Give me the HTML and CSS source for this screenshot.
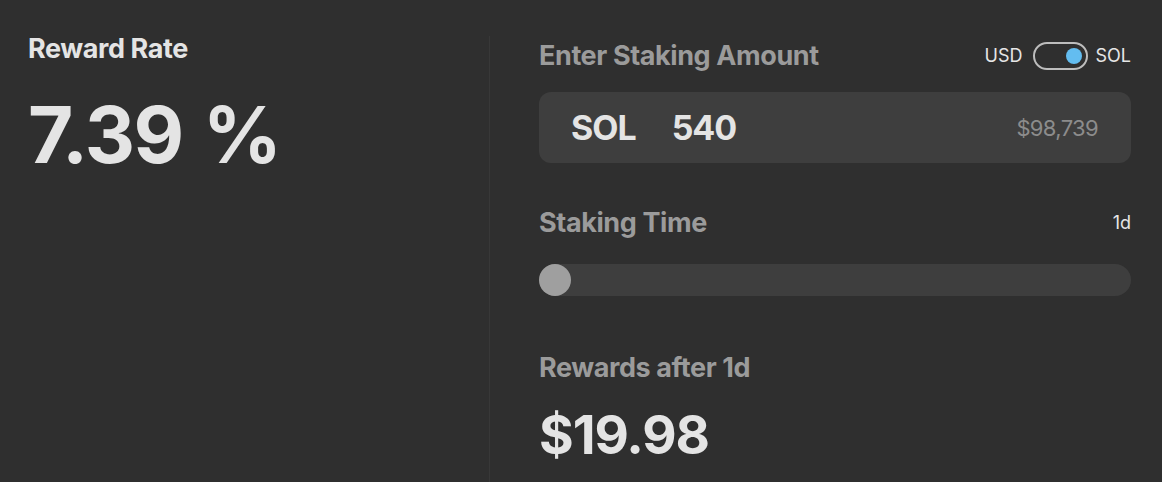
FILE: index.html
```html
<!DOCTYPE html>
<html lang="en">
<head>
<meta charset="utf-8">
<title>Staking Calculator</title>
<link rel="stylesheet" href="styles.css">
</head>
<body>
<div class="calc">
  <section class="rate-col">
    <h2 class="rate-title">Reward Rate</h2>
    <div class="rate-value">7.39 %</div>
  </section>
  <section class="form-col">
    <div class="row-head">
      <h3 class="label">Enter Staking Amount</h3>
      <div class="currency">
        <span class="cur-text">USD</span>
        <span class="toggle"><span class="toggle-knob"></span></span>
        <span class="cur-text">SOL</span>
      </div>
    </div>
    <div class="amount-box">
      <span class="amount-unit">SOL</span>
      <span class="amount-value">540</span>
      <span class="amount-usd">$98,739</span>
    </div>
    <div class="row-head time-head">
      <h3 class="label">Staking Time</h3>
      <span class="cur-text">1d</span>
    </div>
    <div class="track"><span class="thumb"></span></div>
    <h3 class="label rewards-label">Rewards after 1d</h3>
    <div class="rewards-value">$19.98</div>
  </section>
</div>
</body>
</html>
```
FILE: styles.css
```css
* { box-sizing: border-box; }
html, body {
  margin: 0;
  padding: 0;
  background: #2f2f2f;
  height: 100%;
}
body {
  font-family: Inter, "Noto Sans", "Liberation Sans", sans-serif;
  color: #e4e4e4;
  overflow: hidden;
}
h2, h3 { margin: 0; font-weight: 700; }

.calc {
  display: flex;
  height: 482px;
}

.rate-col {
  width: 489px;
  padding: 35px 0 0 28px;
}
.rate-title {
  font-size: 27px;
  line-height: 28px;
  letter-spacing: -0.015em;
  color: #e4e4e4;
}
.rate-value {
  margin-top: 33px;
  font-size: 78px;
  line-height: 78px;
  font-weight: 700;
  letter-spacing: -0.02em;
  word-spacing: 0.04em;
  color: #e4e4e4;
}

.form-col {
  flex: 1;
  margin-top: 36px;
  border-left: 1px solid #383838;
  padding: 6px 31px 0 49px;
  display: flex;
  flex-direction: column;
}

.row-head {
  display: flex;
  align-items: center;
  justify-content: space-between;
  height: 28px;
}
.label {
  font-size: 27px;
  line-height: 28px;
  letter-spacing: -0.015em;
  color: #9b9b9b;
}

.currency {
  display: flex;
  align-items: center;
}
.cur-text {
  font-size: 18px;
  line-height: 20px;
  color: #e6e6e6;
}
.toggle {
  width: 55px;
  height: 28px;
  margin: 0 8px 0 10px;
  border: 2px solid #bdbdbd;
  border-radius: 14px;
  display: flex;
  align-items: center;
  justify-content: flex-end;
  padding-right: 4px;
}
.toggle-knob {
  width: 16px;
  height: 16px;
  border-radius: 50%;
  background: #63bdf0;
}

.amount-box {
  margin-top: 22px;
  height: 71px;
  background: #3e3e3e;
  border-radius: 12px;
  display: flex;
  align-items: center;
  padding: 0 33px 0 32px;
}
.amount-unit,
.amount-value {
  font-size: 34px;
  font-weight: 700;
  letter-spacing: -0.03em;
  color: #e4e4e4;
}
.amount-value { margin-left: 36px; }
.amount-usd {
  margin-left: auto;
  font-size: 22px;
  letter-spacing: -0.03em;
  color: #8c8c8c;
}

.time-head { margin-top: 46px; }

.track {
  margin-top: 27px;
  height: 32px;
  border-radius: 16px;
  background: #3e3e3e;
  display: flex;
}
.thumb {
  width: 32px;
  height: 32px;
  border-radius: 50%;
  background: #9f9f9f;
}

.rewards-label { margin-top: 58px; }
.rewards-value {
  margin-top: 27px;
  font-size: 53px;
  line-height: 53px;
  font-weight: 700;
  letter-spacing: -0.02em;
  color: #e4e4e4;
}
```
